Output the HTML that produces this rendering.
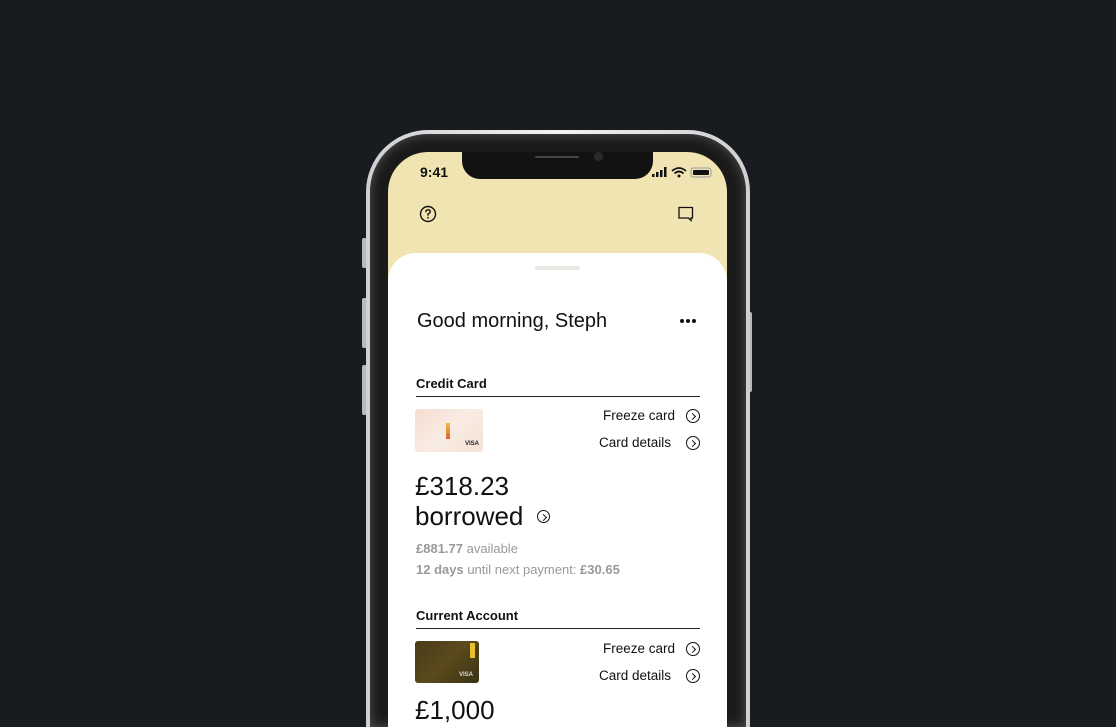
<!DOCTYPE html>
<html style="width:1116px;height:727px;overflow:hidden"><head><style>
*{margin:0;padding:0;box-sizing:border-box}
body{width:1116px;height:727px;background:#181c20;position:relative;overflow:hidden;font-family:"Liberation Sans",sans-serif;color:#111}
.abs{position:absolute}
.btn{position:absolute;background:#b9b9bb;border-radius:2px;width:5px}
.rim{left:366px;top:130px;width:384px;height:700px;border-radius:62px;background:linear-gradient(90deg,#cfcfd1,#f2f2f2 50%,#cfcfd1)}
.bez{left:370px;top:134px;width:376px;height:700px;border-radius:58px;background:#1a1a1a;box-shadow:inset 0 0 12px #555}
.scr{left:388px;top:152px;width:339px;height:575px;border-radius:40px 40px 0 0;background:#f0e4b2;overflow:hidden}
.notch{left:74px;top:-2px;width:191px;height:29px;background:#121212;border-radius:0 0 18px 18px}
.sheet{left:0;top:101px;width:339px;height:700px;background:#fff;border-radius:28px 28px 0 0}
.t{position:absolute;white-space:nowrap}
.chev{position:absolute;width:14px;height:14px;border:1.2px solid #111;border-radius:50%}
.chev:after{content:"";position:absolute;left:2.5px;top:3.5px;width:4px;height:4px;border-right:1.2px solid #111;border-top:1.2px solid #111;transform:rotate(45deg)}
.line{position:absolute;left:28px;width:284px;height:1.3px;background:#222}
</style></head><body>
<div class="btn" style="left:362px;top:238px;height:30px"></div>
<div class="btn" style="left:362px;top:298px;height:50px"></div>
<div class="btn" style="left:362px;top:365px;height:50px"></div>
<div class="btn" style="left:747px;top:312px;height:80px"></div>
<div class="abs rim" style="height:597px;border-radius:62px 62px 0 0"></div>
<div class="abs bez" style="height:593px;border-radius:58px 58px 0 0"></div>
<div class="abs scr">
 <div class="abs notch">
  <div class="abs" style="left:73px;top:6px;width:44px;height:2px;background:#444;border-radius:1px"></div>
  <div class="abs" style="left:132px;top:2px;width:9px;height:9px;background:#2a2a2a;border-radius:50%"></div>
 </div>
 <div class="t" style="left:32px;top:12px;font-size:14px;font-weight:bold">9:41</div>
 <svg class="abs" style="left:264px;top:14px" width="62" height="12" viewBox="0 0 62 12">
  <rect x="0" y="8" width="2.5" height="3" fill="#111"/><rect x="4" y="6" width="2.5" height="5" fill="#111"/><rect x="8" y="4" width="2.5" height="7" fill="#111"/><rect x="12" y="1" width="2.5" height="10" fill="#111"/>
  <path d="M20 5 Q27 -1 34 5 M22.5 7.5 Q27 3.5 31.5 7.5" stroke="#111" stroke-width="1.8" fill="none"/><circle cx="27" cy="10" r="1.5" fill="#111"/>
  <rect x="39" y="2" width="20" height="9" rx="2.5" fill="none" stroke="#999" stroke-width="1"/><rect x="41" y="4" width="16" height="5" rx="1" fill="#111"/>
 </svg>
 <svg class="abs" style="left:31px;top:53px" width="18" height="18" viewBox="0 0 18 18"><circle cx="9" cy="9" r="7.5" fill="none" stroke="#111" stroke-width="1.4"/><path d="M6.8 7.2 Q6.8 4.8 9 4.8 Q11.2 4.8 11.2 6.8 Q11.2 8.2 9 9 V10.6" fill="none" stroke="#111" stroke-width="1.4"/><circle cx="9" cy="12.8" r="0.9" fill="#111"/></svg>
 <svg class="abs" style="left:290px;top:54px" width="16" height="16" viewBox="0 0 16 16"><path d="M1 1.5 H14.5 V12 H13 V14.5 L10.5 12 H1 Z" fill="none" stroke="#111" stroke-width="1.3"/></svg>
 <div class="abs sheet">
  <div class="abs" style="left:147px;top:13px;width:45px;height:4px;background:#ebe8e4;border-radius:2px"></div>
  <div class="t" style="left:29px;top:57px;font-size:20px">Good morning, Steph</div>
  <svg class="abs" style="left:291px;top:65px" width="18" height="6"><circle cx="3" cy="3" r="2" fill="#111"/><circle cx="9" cy="3" r="2" fill="#111"/><circle cx="15" cy="3" r="2" fill="#111"/></svg>
  <div class="t" style="left:28px;top:123px;font-size:13px;font-weight:bold">Credit Card</div>
  <div class="line" style="top:143px"></div>
  <div class="abs" style="left:27px;top:156px;width:68px;height:43px;border-radius:3px;background:linear-gradient(135deg,#f6dcd0,#f8ece4 50%,#f6e2d4)">
   <div class="abs" style="left:31px;top:14px;width:4px;height:16px;background:linear-gradient(#f2c040,#e06030)"></div>
   <div class="t" style="left:50px;top:32px;font-size:6px;font-weight:bold;color:#223">VISA</div>
  </div>
  <div class="t" style="left:215px;top:155px;font-size:13.5px">Freeze card</div>
  <div class="chev" style="left:298px;top:156px"></div>
  <div class="t" style="left:211px;top:182px;font-size:13.5px">Card details</div>
  <div class="chev" style="left:298px;top:183px"></div>
  <div class="t" style="left:27px;top:218px;font-size:26px;line-height:30px">£318.23<br>borrowed</div>
  <div class="chev" style="left:149px;top:257px;width:13px;height:13px"></div>
  <div class="t" style="left:28px;top:285px;font-size:13px;color:#999;line-height:21px"><b>£881.77</b> available<br><b>12 days</b> until next payment: <b>£30.65</b></div>
  <div class="t" style="left:28px;top:355px;font-size:13px;font-weight:bold">Current Account</div>
  <div class="line" style="top:375px"></div>
  <div class="abs" style="left:27px;top:388px;width:64px;height:42px;border-radius:3px;background:linear-gradient(135deg,#4a3a18,#5a4a1c 50%,#3a3216)">
   <div class="abs" style="left:55px;top:2px;width:5px;height:15px;background:#e8c030"></div>
   <div class="t" style="left:44px;top:31px;font-size:6px;font-weight:bold;color:#ddd">VISA</div>
  </div>
  <div class="t" style="left:215px;top:388px;font-size:13.5px">Freeze card</div>
  <div class="chev" style="left:298px;top:389px"></div>
  <div class="t" style="left:211px;top:415px;font-size:13.5px">Card details</div>
  <div class="chev" style="left:298px;top:416px"></div>
  <div class="t" style="left:27px;top:442px;font-size:26px;line-height:30px">£1,000</div>
 </div>
</div>
</body></html>
